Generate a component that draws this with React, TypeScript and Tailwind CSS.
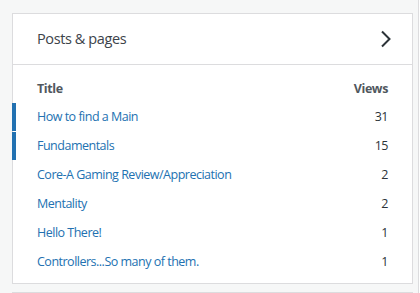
const rows = [
  { title: "How to find a Main", views: 31, bar: true },
  { title: "Fundamentals", views: 15, bar: true },
  { title: "Core-A Gaming Review/Appreciation", views: 2, bar: false },
  { title: "Mentality", views: 2, bar: false },
  { title: "Hello There!", views: 1, bar: false },
  { title: "Controllers...So many of them.", views: 1, bar: false },
];

export default function App() {
  return (
    <div
      className="flex h-[293px] w-[420px] overflow-hidden bg-[#f6f7f7]"
      style={{ fontFamily: '"Open Sans", "Noto Sans", sans-serif' }}
    >
      <div className="w-[418px] shrink-0 pt-[13px] pl-[12px]">
        <div className="w-[401px] border border-[#dcdcde] bg-white">
          <div className="flex h-[51px] items-center justify-between border-b border-[#dcdcde] pl-[24px] pr-[20px]">
            <span className="text-[14.5px] tracking-[-0.4px] text-[#3c434a]">Posts &amp; pages</span>
            <svg width="12" height="18" viewBox="0 0 12 18" fill="none">
              <path d="M2 1.5 L9.5 9 L2 16.5" stroke="#2c3338" strokeWidth="2" />
            </svg>
          </div>
          <div className="pb-[6px]">
            <div className="flex h-[38px] items-center justify-between px-[24px] pt-[10px] text-[12.5px] font-bold tracking-[-0.4px] text-[#50575e]">
              <span>Title</span>
              <span>Views</span>
            </div>
            {rows.map((r) => (
              <div
                key={r.title}
                className="relative flex h-[29px] items-center justify-between px-[24px] text-[12.5px] tracking-[-0.5px]"
              >
                {r.bar && <div className="absolute left-[-1px] top-0 h-[28px] w-[4px] bg-[#2271b1]" />}
                <span className="text-[#2271b1]">{r.title}</span>
                <span className="text-[#2c3338]">{r.views}</span>
              </div>
            ))}
          </div>
        </div>
        <div className="mt-[8px] h-[20px] w-[401px] border border-[#dcdcde] bg-white" />
      </div>
      <div className="flex-1 border-l border-[#dcdcde] bg-white" />
    </div>
  );
}
